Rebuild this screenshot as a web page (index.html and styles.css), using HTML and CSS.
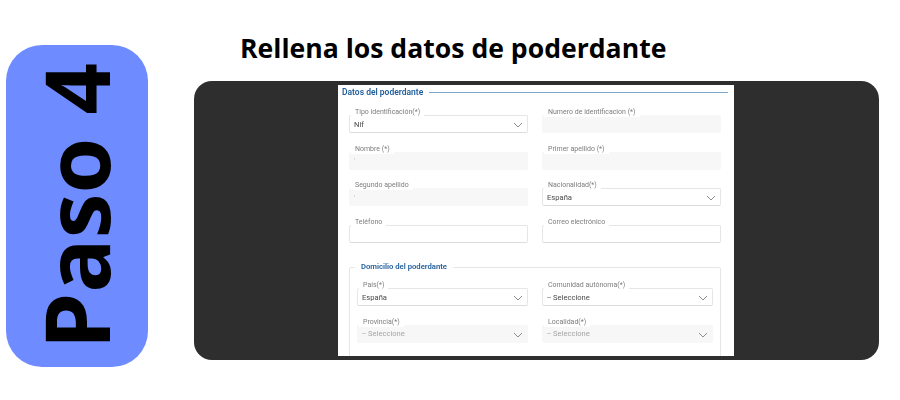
FILE: index.html
```html
<!DOCTYPE html>
<html lang="es">
<head>
<meta charset="utf-8">
<title>Paso 4</title>
<link rel="stylesheet" href="styles.css">
</head>
<body>
<main class="page">
  <aside class="step"><span class="step-text">Paso 4</span></aside>
  <section class="content">
    <h1 class="title">Rellena los datos de poderdante</h1>
    <div class="panel">
      <form class="form">
        <div class="heading"><span class="heading-text">Datos del poderdante</span><span class="heading-line"></span></div>
        <div class="grid main-grid">
          <div class="field select"><span class="label">Tipo identificación(*)</span><span class="value">Nif</span><svg class="chev" viewBox="0 0 10 6"><path d="M1 1l4 4 4-4"/></svg></div>
          <div class="field off"><span class="label">Numero de identificacion (*)</span></div>
          <div class="field off"><span class="label">Nombre (*)</span><span class="value tick">'</span></div>
          <div class="field off"><span class="label">Primer apellido (*)</span></div>
          <div class="field off"><span class="label">Segundo apellido</span><span class="value tick">'</span></div>
          <div class="field select"><span class="label">Nacionalidad(*)</span><span class="value">España</span><svg class="chev" viewBox="0 0 10 6"><path d="M1 1l4 4 4-4"/></svg></div>
          <div class="field"><span class="label">Teléfono</span></div>
          <div class="field"><span class="label">Correo electrónico</span></div>
        </div>
        <fieldset class="address">
          <legend class="legend">Domicilio del poderdante</legend>
          <div class="grid address-grid">
            <div class="field select"><span class="label">País(*)</span><span class="value">España</span><svg class="chev" viewBox="0 0 10 6"><path d="M1 1l4 4 4-4"/></svg></div>
            <div class="field select"><span class="label">Comunidad autónoma(*)</span><span class="value">-- Seleccione</span><svg class="chev" viewBox="0 0 10 6"><path d="M1 1l4 4 4-4"/></svg></div>
            <div class="field off select"><span class="label">Provincia(*)</span><span class="value">-- Seleccione</span><svg class="chev" viewBox="0 0 10 6"><path d="M1 1l4 4 4-4"/></svg></div>
            <div class="field off select"><span class="label">Localidad(*)</span><span class="value">-- Seleccione</span><svg class="chev" viewBox="0 0 10 6"><path d="M1 1l4 4 4-4"/></svg></div>
          </div>
        </fieldset>
      </form>
    </div>
  </section>
</main>
</body>
</html>
```

FILE: styles.css
```css
* { box-sizing: border-box; }
html, body { margin: 0; height: 100%; background: #fff; }
body { overflow: hidden; font-family: "Open Sans", "Liberation Sans", sans-serif; }
.page { display: flex; align-items: flex-start; width: 900px; height: 400px; padding: 45px 21px 0 6px; gap: 46px; }
.step { width: 142px; height: 322px; flex: none; display: flex; align-items: center; justify-content: center; padding-right: 4px; background: #6e8bff; border-radius: 36px; }
.step-text { writing-mode: vertical-rl; transform: rotate(180deg); font-size: 90px; line-height: 1; font-weight: 700; color: #000; white-space: nowrap; }
.content { flex: 1; margin-top: -17px; }
.title { margin: 0 0 12px 46px; font-size: 26.6px; line-height: 41px; font-weight: 700; color: #000; }
.panel { height: 279px; padding: 4px 1px 4px 0; display: flex; justify-content: center; background: #2e2e2e; border-radius: 18px; overflow: hidden; }
.form { width: 396px; height: 271px; background: #fff; overflow: hidden; padding: 0 6px 0 4px; font-family: Roboto, "Liberation Sans", sans-serif; filter: blur(0.5px); }
.heading { display: flex; align-items: center; gap: 6px; height: 14px; }
.heading-text { font-size: 8.5px; font-weight: 600; color: #1f5c99; white-space: nowrap; }
.heading-line { flex: 1; height: 1px; background: #7ba7cc; }
.grid { display: grid; grid-auto-rows: 18px; row-gap: 18.6px; }
.main-grid { grid-template-columns: 179px 179px; column-gap: 14px; margin: 16px 0 0 7px; }
.field { position: relative; display: flex; align-items: center; padding: 0 4px; border: 1px solid #e6e6e6; border-bottom-color: #dcdcdc; border-radius: 2px; background: #fff; }
.field.off { background: #f7f7f7; border-color: #f7f7f7; }
.label { position: absolute; left: 1px; top: -9px; padding: 0 4px; background: #fff; font-size: 7px; line-height: 10px; color: #7d7d7d; white-space: nowrap; }
.value { font-size: 7.6px; color: #4a4a4a; }
.off .value { color: #a5a5a5; }
.value.tick { color: #bbb; }
.chev { position: absolute; right: 4px; top: 6px; width: 10px; height: 6px; fill: none; stroke: #808080; stroke-width: 0.9; }
.address { margin: 19.5px 0 0 7px; width: 372px; height: 120px; padding: 0 7px; border: 1px solid #e6e6e6; border-radius: 2px; min-width: 0; }
.legend { margin-left: -2px; padding: 0 6px; font-size: 7.7px; font-weight: 600; line-height: 10px; color: #1f5c99; }
.address-grid { grid-template-columns: 171px 171px; column-gap: 14px; margin-top: 16px; }
```
